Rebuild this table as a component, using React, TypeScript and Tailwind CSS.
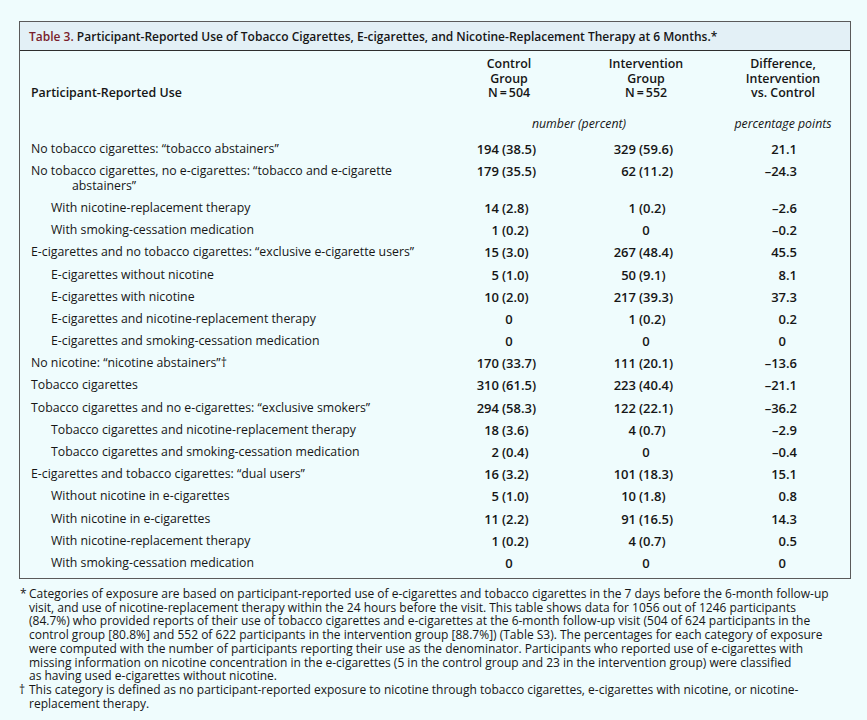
import React from 'react'

type Row = {
  level: 0 | 1
  label: string
  cont?: string
  control: string
  intervention: string
  diff: string
}

const rows: Row[] = [
  { level: 0, label: 'No tobacco cigarettes: “tobacco abstainers”', control: '194 (38.5)', intervention: '329 (59.6)', diff: '21.1' },
  {
    level: 0,
    label: 'No tobacco cigarettes, no e-cigarettes: “tobacco and e-cigarette',
    cont: 'abstainers”',
    control: '179 (35.5)',
    intervention: '62 (11.2)',
    diff: '–24.3',
  },
  { level: 1, label: 'With nicotine-replacement therapy', control: '14 (2.8)', intervention: '1 (0.2)', diff: '–2.6' },
  { level: 1, label: 'With smoking-cessation medication', control: '1 (0.2)', intervention: '0', diff: '–0.2' },
  { level: 0, label: 'E-cigarettes and no tobacco cigarettes: “exclusive e-cigarette users”', control: '15 (3.0)', intervention: '267 (48.4)', diff: '45.5' },
  { level: 1, label: 'E-cigarettes without nicotine', control: '5 (1.0)', intervention: '50 (9.1)', diff: '8.1' },
  { level: 1, label: 'E-cigarettes with nicotine', control: '10 (2.0)', intervention: '217 (39.3)', diff: '37.3' },
  { level: 1, label: 'E-cigarettes and nicotine-replacement therapy', control: '0', intervention: '1 (0.2)', diff: '0.2' },
  { level: 1, label: 'E-cigarettes and smoking-cessation medication', control: '0', intervention: '0', diff: '0' },
  { level: 0, label: 'No nicotine: “nicotine abstainers”†', control: '170 (33.7)', intervention: '111 (20.1)', diff: '–13.6' },
  { level: 0, label: 'Tobacco cigarettes', control: '310 (61.5)', intervention: '223 (40.4)', diff: '–21.1' },
  { level: 0, label: 'Tobacco cigarettes and no e-cigarettes: “exclusive smokers”', control: '294 (58.3)', intervention: '122 (22.1)', diff: '–36.2' },
  { level: 1, label: 'Tobacco cigarettes and nicotine-replacement therapy', control: '18 (3.6)', intervention: '4 (0.7)', diff: '–2.9' },
  { level: 1, label: 'Tobacco cigarettes and smoking-cessation medication', control: '2 (0.4)', intervention: '0', diff: '–0.4' },
  { level: 0, label: 'E-cigarettes and tobacco cigarettes: “dual users”', control: '16 (3.2)', intervention: '101 (18.3)', diff: '15.1' },
  { level: 1, label: 'Without nicotine in e-cigarettes', control: '5 (1.0)', intervention: '10 (1.8)', diff: '0.8' },
  { level: 1, label: 'With nicotine in e-cigarettes', control: '11 (2.2)', intervention: '91 (16.5)', diff: '14.3' },
  { level: 1, label: 'With nicotine-replacement therapy', control: '1 (0.2)', intervention: '4 (0.7)', diff: '0.5' },
  { level: 1, label: 'With smoking-cessation medication', control: '0', intervention: '0', diff: '0' },
]

const footnote = [
  'Categories of exposure are based on participant-reported use of e-cigarettes and tobacco cigarettes in the 7 days before the 6-month follow-up',
  'visit, and use of nicotine-replacement therapy within the 24 hours before the visit. This table shows data for 1056 out of 1246 participants',
  '(84.7%) who provided reports of their use of tobacco cigarettes and e-cigarettes at the 6-month follow-up visit (504 of 624 participants in the',
  'control group [80.8%] and 552 of 622 participants in the intervention group [88.7%]) (Table S3). The percentages for each category of exposure',
  'were computed with the number of participants reporting their use as the denominator. Participants who reported use of e-cigarettes with',
  'missing information on nicotine concentration in the e-cigarettes (5 in the control group and 23 in the intervention group) were classified',
  'as having used e-cigarettes without nicotine.',
]

const daggerNote = [
  'This category is defined as no participant-reported exposure to nicotine through tobacco cigarettes, e-cigarettes with nicotine, or nicotine-',
  'replacement therapy.',
]

// count right-aligned, percent starts at a fixed "(" column
function Count({ value, wide }: { value: string; wide?: boolean }) {
  if (value === '0') return <div className="text-center text-[13px] font-semibold">0</div>
  const [n, p] = value.split(' ')
  return (
    <div className="flex whitespace-nowrap text-[13px] font-semibold">
      <span className={wide ? 'w-[60px] text-right' : 'w-[57px] text-right'}>{n}</span>
      <span className="ml-[3px]">{p}</span>
    </div>
  )
}

// decimal-aligned difference
function Diff({ value }: { value: string }) {
  const [int, dec] = value.split('.')
  return (
    <div className="flex whitespace-nowrap text-[13px] font-semibold">
      <span className="w-[70px] text-right">{int}</span>
      {dec && <span>.{dec}</span>}
    </div>
  )
}

export default function App() {
  return (
    <div className="min-h-screen bg-[#effcfd] pl-[19px] pt-[21px] pb-4 font-['Open_Sans',sans-serif] text-[#161616]">
      <div className="w-[832px] border border-[#5a5a5a]">
        <div className="h-[29px] border-b border-[#2e2e2e] bg-[#e3f0f6] pl-[9px] text-[12px] font-semibold leading-[29px] whitespace-nowrap">
          <span className="text-[#7a1e2b]">Table 3.</span> Participant-Reported Use of Tobacco Cigarettes, E-cigarettes, and
          Nicotine-Replacement Therapy at 6 Months.*
        </div>

        <div className="pl-[11px] pb-[4px] text-[12.3px] font-medium">
          <div className="grid grid-cols-[411px_134px_140px_134px] pt-[6px] text-[12.4px] font-semibold leading-[14.5px]">
            <div className="self-end">Participant-Reported Use</div>
            <div className="text-center">
              Control
              <br />
              Group
              <br />
              N{'\u2009'}={'\u2009'}504
            </div>
            <div className="text-center">
              Intervention
              <br />
              Group
              <br />
              N{'\u2009'}={'\u2009'}552
            </div>
            <div className="text-center">
              Difference,
              <br />
              Intervention
              <br />
              vs. Control
            </div>
          </div>

          <div className="grid grid-cols-[411px_274px_134px] pt-[16px] pb-[7px] italic leading-[14px]">
            <div />
            <div className="text-center">number (percent)</div>
            <div className="text-center">percentage points</div>
          </div>

          {rows.map((r, i) => (
            <div key={i} className="grid grid-cols-[411px_134px_140px_134px] py-[4.1px] leading-[14px]">
              <div className={r.level === 1 ? 'pl-[20px]' : ''}>
                {r.label}
                {r.cont && <div className="pl-[41px] pt-[1px]">{r.cont}</div>}
              </div>
              <Count value={r.control} />
              <Count value={r.intervention} wide />
              <Diff value={r.diff} />
            </div>
          ))}
        </div>
      </div>

      <div className="mt-[8px] text-[12px] font-medium leading-[13.7px] whitespace-nowrap">
        <div className="flex">
          <span className="w-[10px] pl-[1px]">*</span>
          <div>
            {footnote.map((l, i) => (
              <div key={i}>{l}</div>
            ))}
          </div>
        </div>
        <div className="flex">
          <span className="w-[10px]">†</span>
          <div>
            {daggerNote.map((l, i) => (
              <div key={i}>{l}</div>
            ))}
          </div>
        </div>
      </div>
    </div>
  )
}
